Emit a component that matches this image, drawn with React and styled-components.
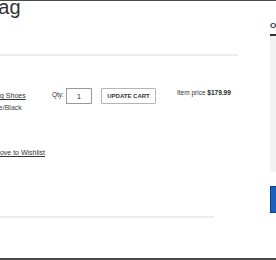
import React from 'react';
import styled, { createGlobalStyle } from 'styled-components';

const GlobalStyle = createGlobalStyle`
    html, body {
        margin: 0;
        padding: 0;
        background: #fff;
        overflow: hidden;
    }
    body {
        font-family: 'Liberation Sans', Arial, sans-serif;
        color: #333;
    }
`

const App = () => {
    return (
        <>
            <GlobalStyle />
            <Frame>
                <Main>
                    <Title>Your Bag</Title>
                    <Rule $width="100%" />
                    <ItemRow>
                        <Info>
                            <ProductName href="#">Ultraboost Running Shoes</ProductName>
                            <Variant>Color: Cloud White/Black</Variant>
                            <Links>
                                <TextLink href="#">Remove</TextLink>
                                <TextLink href="#">Move to Wishlist</TextLink>
                            </Links>
                        </Info>
                        <QtyGroup>
                            <QtyLabel>Qty:</QtyLabel>
                            <QtyInput type="text" defaultValue="1" />
                            <UpdateButton>UPDATE CART</UpdateButton>
                        </QtyGroup>
                        <Price>
                            Item price <strong>$179.99</strong>
                        </Price>
                    </ItemRow>
                    <Rule $width="270px" />
                </Main>
                <Aside>
                    <SummaryTitle>Order Summary</SummaryTitle>
                    <SummaryBox />
                    <CheckoutButton>CHECKOUT</CheckoutButton>
                </Aside>
            </Frame>
        </>
    )
}

const Frame = styled.div`
    display: flex;
    align-items: flex-start;
    height: 260px;
    box-sizing: border-box;
    border-top: 1px solid #4a4a4a;
    border-bottom: 2px solid #4a4a4a;
    overflow: hidden;
`

const Main = styled.div`
    flex: none;
    width: 294px;
    margin-left: -56px;
`

const Title = styled.h1`
    margin: -4px 0 0 -5px;
    font-size: 20px;
    line-height: 20px;
    font-weight: 400;
    color: #333;
`

const Rule = styled.div`
    height: 2px;
    width: ${p => p.$width};
    background: #ededed;
    margin-top: ${p => (p.$width === '100%' ? '37px' : '0')};
`

const ItemRow = styled.div`
    display: flex;
    align-items: flex-start;
    padding: 32px 0 57px 0;
    height: 160px;
    box-sizing: border-box;
`

const Info = styled.div`
    flex: none;
    width: 100px;
    display: flex;
    flex-direction: column;
    padding-top: 2px;
    font-size: 7px;
    line-height: 12px;
`

const ProductName = styled.a`
    color: #333;
    text-decoration: underline;
    white-space: nowrap;
`

const Variant = styled.span`
    color: #444;
    white-space: nowrap;
`

const Links = styled.div`
    display: flex;
    gap: 24px;
    margin-top: 33px;
    white-space: nowrap;
`

const TextLink = styled.a`
    color: #333;
    text-decoration: underline;
`

const QtyGroup = styled.div`
    display: flex;
    align-items: flex-start;
    margin-left: 8px;
`

const QtyLabel = styled.label`
    width: 14px;
    font-size: 6.5px;
    line-height: 8px;
    margin-top: 3px;
    color: #333;
`

const QtyInput = styled.input`
    width: 26px;
    height: 16px;
    box-sizing: border-box;
    border: 1px solid #9a9a9a;
    padding: 0;
    text-align: center;
    font-family: 'Liberation Sans', Arial, sans-serif;
    font-size: 7px;
    color: #222;
`

const UpdateButton = styled.button`
    margin-left: 9px;
    width: 55px;
    height: 16px;
    box-sizing: border-box;
    padding: 0;
    background: #fff;
    border: 1px solid #b5b5b5;
    border-radius: 1px;
    font-family: 'Liberation Sans', Arial, sans-serif;
    font-size: 6px;
    font-weight: 700;
    color: #333;
`

const Price = styled.div`
    margin-left: 21px;
    margin-top: 1px;
    font-size: 6.5px;
    line-height: 8px;
    white-space: nowrap;
    color: #333;
    strong {
        font-weight: 700;
        color: #222;
    }
`

const Aside = styled.div`
    flex: none;
    width: 120px;
    margin-left: 32px;
    display: flex;
    flex-direction: column;
`

const SummaryTitle = styled.h2`
    margin: 20px 0 0 0;
    padding-bottom: 3px;
    font-size: 8px;
    line-height: 10px;
    font-weight: 700;
    color: #333;
    border-bottom: 2px solid #333;
`

const SummaryBox = styled.div`
    height: 136px;
    background: #f2f2f2;
`

const CheckoutButton = styled.button`
    margin-top: 14px;
    height: 27px;
    background: #1b5fbf;
    border: 1px solid #0e3d80;
    color: #fff;
    font-family: 'Liberation Sans', Arial, sans-serif;
    font-size: 8px;
    font-weight: 700;
    text-align: left;
`

export default App
